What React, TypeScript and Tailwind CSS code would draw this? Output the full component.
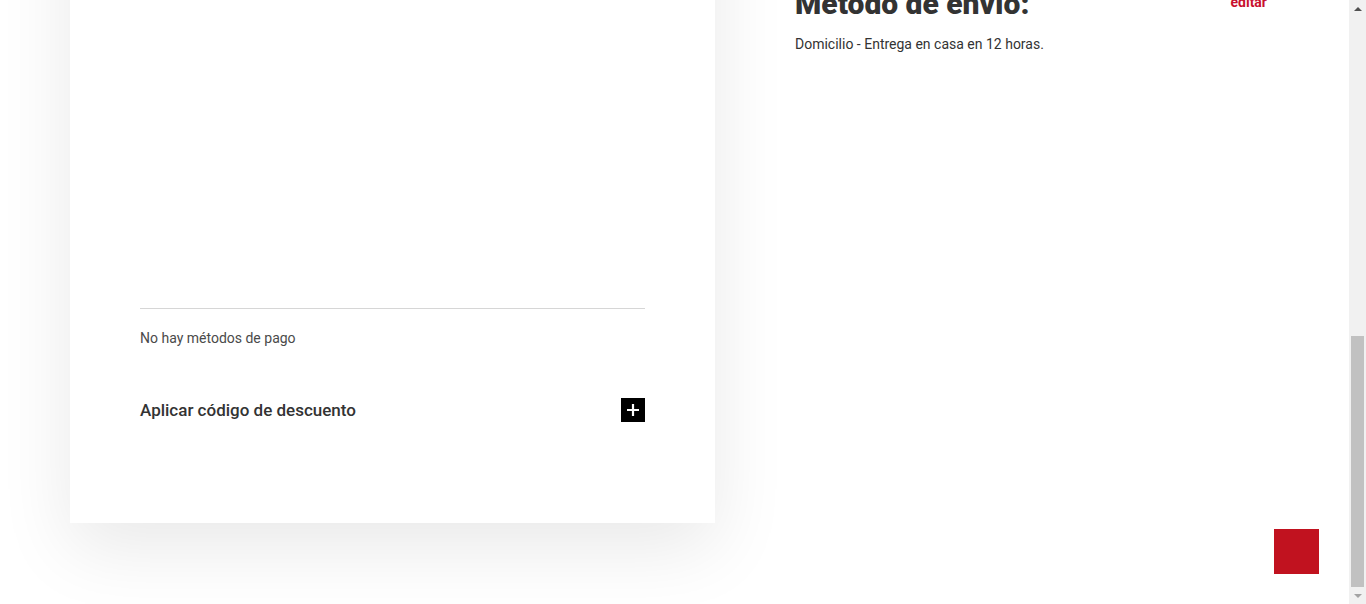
import React, { useLayoutEffect, useRef } from "react";

const font = { fontFamily: "Roboto, 'Noto Sans', sans-serif" };

function PlusIcon() {
  return (
    <svg width="12" height="12" viewBox="0 0 12 12" fill="none">
      <path d="M6 0v12M0 6h12" stroke="#fff" strokeWidth="2.2" />
    </svg>
  );
}

function PaymentCard() {
  return (
    <div className="flex h-[1251px] w-[645px] shrink-0 flex-col bg-white px-[70px] pb-[101px] pt-[70px] shadow-[0_25px_70px_rgba(0,0,0,0.09)]">
      <h2 className="text-[30px] font-black leading-9 text-[#333]">Método de pago</h2>
      <div className="flex-1" />
      <div className="border-t border-[#d6d6d6]" />
      <p className="mt-[19px] text-sm leading-5 text-[#4a4a4a]">No hay métodos de pago</p>
      <div className="mt-[50px] flex h-6 items-center justify-between">
        <span className="text-[17px] font-medium leading-6 text-[#333]">Aplicar código de descuento</span>
        <button className="flex h-6 w-6 items-center justify-center bg-black">
          <PlusIcon />
        </button>
      </div>
    </div>
  );
}

function SummaryColumn() {
  return (
    <div className="flex w-[472px] flex-col">
      <div className="flex h-[714px] flex-col gap-6">
        <h2 className="text-[30px] font-black leading-9 text-[#333]">Resumen del pedido</h2>
        <div className="flex items-start justify-between">
          <h3 className="text-[30px] font-black leading-9 text-[#333]">Dirección de envío:</h3>
          <a className="mt-[6px] text-sm font-bold text-[#c8102e]">editar</a>
        </div>
        <p className="text-sm leading-5 text-[#333]">Calle Principal 1, Madrid</p>
      </div>
      <div className="flex items-start justify-between">
        <h3 className="text-[30px] font-black leading-9 text-[#333]">Método de envío:</h3>
        <a className="mt-[6px] text-sm font-bold leading-5 text-[#c8102e]">editar</a>
      </div>
      <p className="mt-[12px] text-sm leading-5 text-[#333]">Domicilio - Entrega en casa en 12 horas.</p>
    </div>
  );
}

// the browser's own scrollbar is hidden in this window, so paint one over the edge
function ScrollbarStrip() {
  return (
    <div className="fixed right-0 top-0 flex h-screen w-[17px] flex-col bg-[#f1f1f1]">
      <div className="flex h-[17px] items-center justify-center">
        <svg width="8" height="4" viewBox="0 0 8 4">
          <path d="M0 4L4 0L8 4Z" fill="#505050" />
        </svg>
      </div>
      <div className="flex flex-1 flex-col justify-end px-[2px]">
        <div className="h-[251px] bg-[#c1c1c1]" />
      </div>
      <div className="flex h-[17px] items-center justify-center">
        <svg width="8" height="4" viewBox="0 0 8 4">
          <path d="M0 0L8 0L4 4Z" fill="#a3a3a3" />
        </svg>
      </div>
    </div>
  );
}

export default function App() {
  const scroller = useRef<HTMLDivElement>(null);

  useLayoutEffect(() => {
    const el = scroller.current;
    if (el) el.scrollTop = el.scrollHeight;
  }, []);

  return (
    <div ref={scroller} className="h-screen overflow-y-scroll bg-white" style={font}>
      <div className="flex gap-[80px] pb-[81px] pl-[70px] pt-[40px]">
        <PaymentCard />
        <SummaryColumn />
      </div>
      <button className="fixed bottom-[30px] right-[47px] h-[45px] w-[45px] bg-[#c1121f]" aria-label="Subir" />
      <ScrollbarStrip />
    </div>
  );
}
